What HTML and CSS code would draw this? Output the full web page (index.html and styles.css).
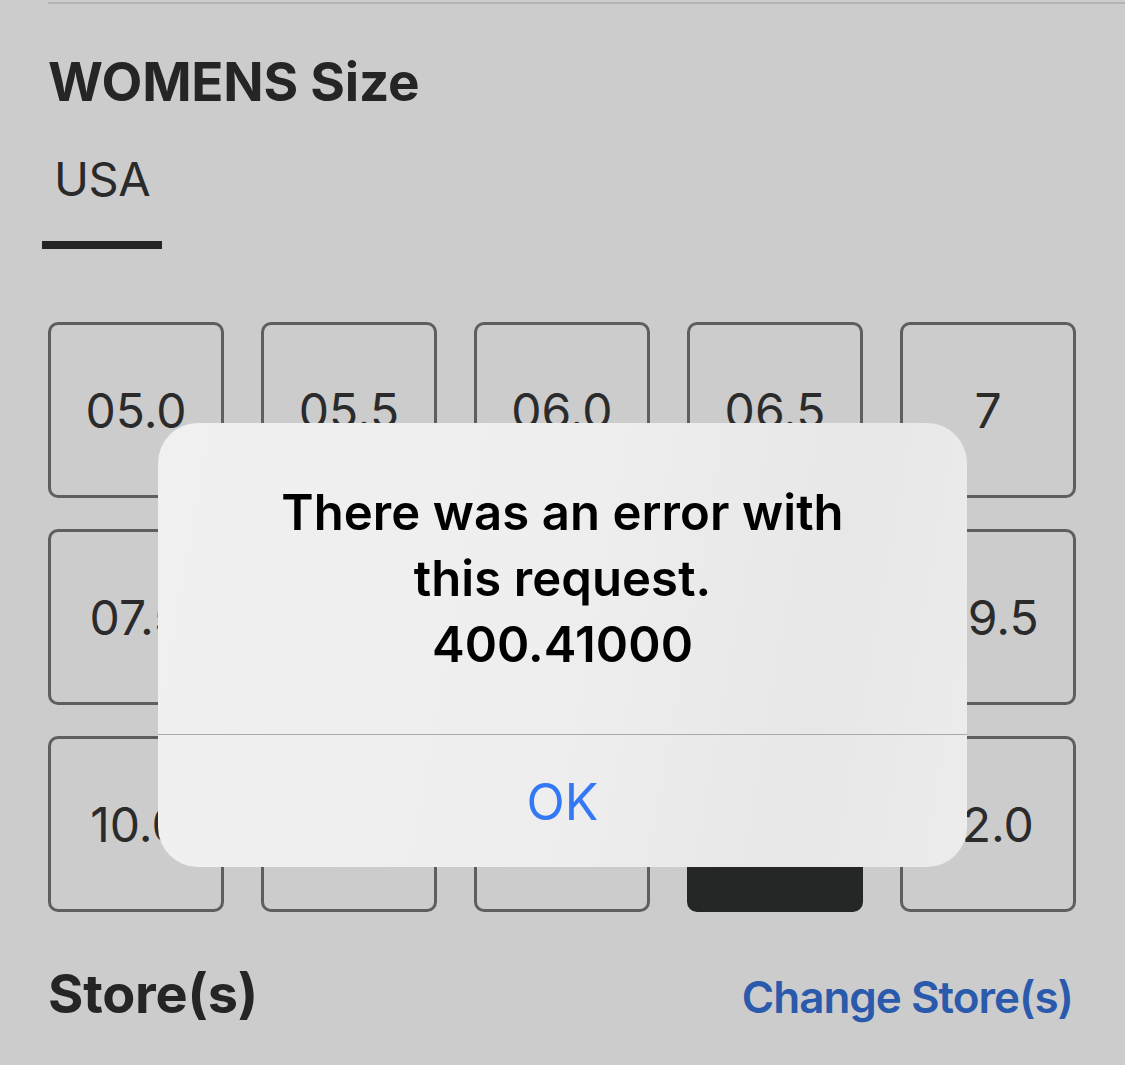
FILE: index.html
```html
<!DOCTYPE html>
<html lang="en">
<head>
<meta charset="utf-8">
<title>Size selection</title>
<link rel="stylesheet" href="styles.css">
</head>
<body>
  <div class="rule"></div>
  <main class="page">
    <h2 class="section-title">WOMENS Size</h2>
    <div class="tabs">
      <div class="tab tab-active">USA</div>
    </div>
    <div class="size-grid">
      <button class="size">05.0</button>
      <button class="size">05.5</button>
      <button class="size">06.0</button>
      <button class="size">06.5</button>
      <button class="size">7</button>
      <button class="size">07.5</button>
      <button class="size">08.0</button>
      <button class="size">08.5</button>
      <button class="size">09.0</button>
      <button class="size">09.5</button>
      <button class="size">10.0</button>
      <button class="size">10.5</button>
      <button class="size">11.0</button>
      <button class="size size-selected">11.5</button>
      <button class="size">12.0</button>
    </div>
    <div class="stores-row">
      <h2 class="section-title stores-title">Store(s)</h2>
      <a class="link" href="#">Change Store(s)</a>
    </div>
  </main>

  <div class="alert" role="alertdialog">
    <div class="alert-body">
      <p class="alert-message">There was an error with<br>this request.<br>400.41000</p>
    </div>
    <button class="alert-action">OK</button>
  </div>
</body>
</html>
```
FILE: styles.css
```css
* {
  box-sizing: border-box;
}

html, body {
  margin: 0;
  padding: 0;
}

body {
  background: #cccccc;
  font-family: Inter, "Noto Sans", "Liberation Sans", sans-serif;
  color: #262626;
  width: 1125px;
  height: 1065px;
  overflow: hidden;
  position: relative;
}

.rule {
  height: 2px;
  margin: 2px 0 0 48px;
  background: #b3b3b3;
}

.page {
  padding: 0 49px 0 48px;
}

.section-title {
  margin: 47px 0 0 0;
  font-size: 53px;
  font-weight: 700;
  line-height: 1.2;
  color: #252525;
  letter-spacing: -0.2px;
}

.tabs {
  display: flex;
  margin-top: 36px;
  margin-left: -6px;
}

.tab {
  width: 120px;
  padding: 0 0 34px 12px;
  font-size: 47px;
  font-weight: 400;
  line-height: 1.2;
  letter-spacing: -0.5px;
  color: #2a2a2a;
}

.tab-active {
  border-bottom: 8px solid #252525;
}

.size-grid {
  display: grid;
  grid-template-columns: repeat(5, 176px);
  grid-auto-rows: 176px;
  column-gap: 37px;
  row-gap: 31px;
  margin-top: 73px;
}

.size {
  display: flex;
  align-items: center;
  justify-content: center;
  margin: 0;
  padding: 3px 0 0 0;
  background: transparent;
  border: 3px solid #5e5e5e;
  border-radius: 10px;
  font-family: inherit;
  font-size: 48px;
  font-weight: 400;
  line-height: 1;
  color: #2b2b2b;
}

.size-selected {
  background: #252626;
  border-color: #252626;
  color: #ffffff;
}

.stores-row {
  display: flex;
  justify-content: space-between;
  align-items: baseline;
  margin-top: 50px;
}

.stores-title {
  margin: 0;
  font-size: 54px;
}

.link {
  font-size: 44px;
  font-weight: 600;
  letter-spacing: -1px;
  color: #2a5aac;
  text-decoration: none;
  margin-right: 3px;
}

/* Modal alert over the page */
.alert {
  position: absolute;
  left: 158px;
  top: 423px;
  width: 809px;
  height: 444px;
  border-radius: 40px;
  overflow: hidden;
  background: linear-gradient(100deg, #f0f0f0 0%, #eeeeee 50%, #e7e7e7 80%, #ececec 100%);
  display: flex;
  flex-direction: column;
}

.alert-body {
  height: 312px;
  padding-top: 57px;
  border-bottom: 1.5px solid #a9a9a9;
}

.alert-message {
  margin: 0;
  text-align: center;
  font-size: 49px;
  font-weight: 600;
  line-height: 66px;
  letter-spacing: 0.1px;
  color: #000000;
}

.alert-action {
  flex: 1;
  margin: 0;
  padding: 2px 0 0 0;
  border: 0;
  background: transparent;
  font-family: inherit;
  font-size: 50px;
  font-weight: 400;
  color: #3478f6;
}
```
